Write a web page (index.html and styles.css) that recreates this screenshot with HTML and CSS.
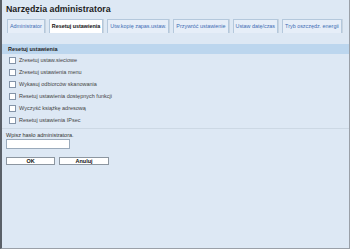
FILE: index.html
```html
<!DOCTYPE html>
<html lang="pl">
<head>
  <meta charset="UTF-8" />
  <link rel="stylesheet" href="styles.css">
  <title>Narzędzia administratora</title>
</head>
<body>
<div class="window">
  <h1>Narzędzia administratora</h1>

  <div class="tabs">
    <span class="tab">Administrator</span>
    <span class="tab active">Resetuj ustawienia</span>
    <span class="tab">Utw.kopię zapas.ustaw.</span>
    <span class="tab">Przywróć ustawienie</span>
    <span class="tab">Ustaw datę/czas</span>
    <span class="tab">Tryb oszczędz. energii</span>
  </div>

  <div class="section-head">Resetuj ustawienia</div>

  <ul class="options">
    <li><span class="box"></span>Zresetuj ustaw.sieciowe</li>
    <li><span class="box"></span>Zresetuj ustawienia menu</li>
    <li><span class="box"></span>Wykasuj odbiorców skanowania</li>
    <li><span class="box"></span>Resetuj ustawienia dostępnych funkcji</li>
    <li><span class="box"></span>Wyczyść książkę adresową</li>
    <li><span class="box"></span>Resetuj ustawienia IPsec</li>
  </ul>

  <div class="password">
    <label>Wpisz hasło administratora.</label>
    <div class="input"></div>
    <div class="buttons">
      <button>OK</button>
      <button>Anuluj</button>
    </div>
  </div>
</div>
</body>
</html>
```

FILE: styles.css
```css
/* Page frame */
body {
  margin: 0;
  font-family: 'Liberation Sans', Arial, sans-serif;
  background: #dde8f4;
}

.window {
  height: 249px;
  box-sizing: border-box;
  border-left: 2px solid #5a6068;
  border-right: 1px solid #9aa0a8;
  border-bottom: 1px solid #9aa0a8;
  background: #dde8f4;
  overflow: hidden;
}

h1 {
  margin: 0;
  padding: 3px 0 0 4px;
  font-size: 8.8px;
  line-height: 12px;
  color: #1e1e1e;
}

/* Tabs */
.tabs {
  display: flex;
  gap: 4px;
  padding: 4px 0 0 5px;
}

.tab {
  padding: 0 2px;
  height: 13px;
  line-height: 13px;
  font-size: 5.4px;
  color: #3c6cb4;
  background: #e6eef8;
  border: 1px solid #b4c8dc;
  border-bottom: none;
  box-shadow: 1px 0 0 #c8d4e0;
  white-space: nowrap;
}

.tab.active {
  background: #ffffff;
  color: #111;
  font-weight: bold;
}

/* Section header */
.section-head {
  margin-top: 11px;
  height: 10px;
  line-height: 10px;
  padding-left: 6px;
  background: #bcd6ee;
  font-size: 5.5px;
  font-weight: bold;
  color: #1e1e1e;
}

.options {
  list-style: none;
  margin: 0;
  padding: 0 0 2px 7px;
  border-bottom: 1px solid #ccd8e4;
}

.options li {
  display: flex;
  align-items: center;
  height: 12px;
  font-size: 5.5px;
  color: #444;
}

.box {
  width: 5px;
  height: 5px;
  margin-right: 3px;
  background: #fff;
  border: 1px solid #8494a8;
}

/* Password form */
.password {
  padding: 3px 0 0 4px;
}

.password label {
  display: block;
  font-size: 5.5px;
  line-height: 7px;
  color: #333;
}

.input {
  width: 62px;
  height: 8px;
  background: #fff;
  border: 1px solid #9aaabb;
}

.buttons {
  display: flex;
  gap: 4px;
  margin-top: 8px;
}

button {
  width: 49px;
  height: 8px;
  padding: 0;
  font-family: 'Liberation Sans', Arial, sans-serif;
  font-size: 5.5px;
  font-weight: bold;
  line-height: 6px;
  color: #111;
  background: #fff;
  border: 1px solid #8c96a0;
}

button + button {
  width: 50px;
}
```
